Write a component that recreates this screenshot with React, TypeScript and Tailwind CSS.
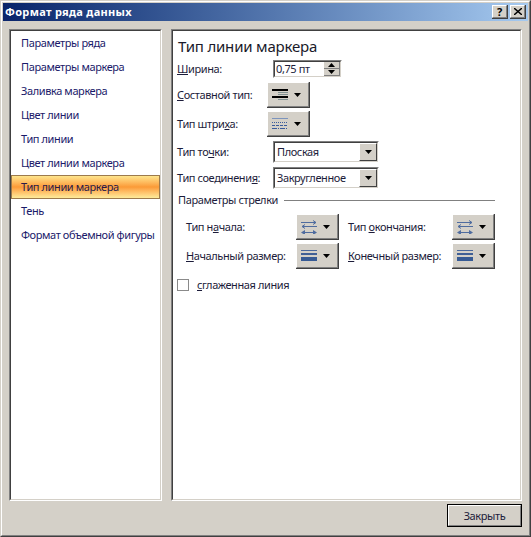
const font = "font-['Noto_Sans',sans-serif]";

const items = [
  "Параметры ряда",
  "Параметры маркера",
  "Заливка маркера",
  "Цвет линии",
  "Тип линии",
  "Цвет линии маркера",
  "Тип линии маркера",
  "Тень",
  "Формат объемной фигуры",
];

function Caret() {
  return (
    <svg width="7" height="4" viewBox="0 0 7 4" className="shrink-0">
      <path d="M0 0h7L3.5 4z" fill="#000" />
    </svg>
  );
}

function CompoundIcon() {
  return (
    <svg width="16" height="11" viewBox="0 0 16 11">
      <rect x="0" y="0" width="16" height="2" fill="#000" />
      <rect x="6" y="3" width="10" height="1" fill="#7f8f8f" />
      <rect x="6" y="5" width="10" height="1" fill="#7f8f8f" />
      <rect x="0" y="7" width="16" height="2" fill="#000" />
      <rect x="6" y="10" width="10" height="1" fill="#7f8f8f" />
    </svg>
  );
}

function DashIcon() {
  return (
    <svg width="16" height="11" viewBox="0 0 16 11">
      <path d="M0 .5h16" stroke="#7c94bd" />
      <path d="M0 4.5h16" stroke="#3a5c9c" strokeDasharray="1 1" />
      <path d="M0 7.5h16" stroke="#3a5c9c" strokeDasharray="3 1" />
      <path d="M0 10.5h16" stroke="#3a5c9c" strokeDasharray="5 1 1 1" />
    </svg>
  );
}

function ArrowIcon() {
  return (
    <svg width="16" height="14" viewBox="0 0 16 14" fill="none" stroke="#4f6c9f">
      <path d="M0 2.5h15M12 .5l3 2-3 2" />
      <path d="M1 6.5h15M4 4.5l-3 2 3 2" />
      <path d="M1 12.5h14" />
      <path d="M0 12.5l4-2.5v5zM16 12.5l-4-2.5v5z" fill="#4f6c9f" stroke="none" />
    </svg>
  );
}

function SizeIcon() {
  return (
    <svg width="16" height="11" viewBox="0 0 16 11">
      <rect x="0" y="0" width="16" height="1" fill="#4a689c" />
      <rect x="0" y="3" width="16" height="2" fill="#3f5f96" />
      <rect x="0" y="7" width="16" height="4" fill="#365a94" />
    </svg>
  );
}

function ToolButton({ children }: { children: React.ReactNode }) {
  return (
    <div className="h-[26px] w-[43px] shrink-0 border-r border-b border-[#404040] bg-[#d4d0c8]">
      <div className="flex h-full items-center border-t border-l border-r border-b border-t-white border-l-white border-r-[#808080] border-b-[#808080] pl-[4px]">
        <div className="flex w-[22px] justify-start">{children}</div>
        <Caret />
      </div>
    </div>
  );
}

function Sunken({ className, children }: { className: string; children: React.ReactNode }) {
  return (
    <div className={`${className} border-t border-l border-r border-b border-t-[#808080] border-l-[#808080] border-r-white border-b-white`}>
      <div className="flex h-full items-stretch border-t border-l border-r border-b border-t-[#404040] border-l-[#404040] border-r-[#d4d0c8] border-b-[#d4d0c8] bg-white">
        {children}
      </div>
    </div>
  );
}

function Combo({ value }: { value: string }) {
  return (
    <Sunken className="h-[22px] w-[106px] shrink-0">
      <div className="flex flex-1 items-center pl-[2px] whitespace-nowrap text-[#1c1c3a]">{value}</div>
      <div className="flex w-[18px] items-center justify-center border-t border-l border-r border-b border-t-white border-l-white border-r-[#404040] border-b-[#404040] bg-[#d4d0c8]">
        <Caret />
      </div>
    </Sunken>
  );
}

function Spin() {
  return (
    <Sunken className="h-[18px] w-[69px] shrink-0">
      <div className="flex flex-1 items-center pl-[1px] text-[#1c1c3a]">0,75 пт</div>
      <div className="flex w-[16px] flex-col">
        <div className="flex flex-1 items-center justify-center border-r border-b border-[#808080] bg-[#d4d0c8]">
          <svg width="7" height="4" viewBox="0 0 7 4">
            <path d="M0 4h7L3.5 0z" fill="#000" />
          </svg>
        </div>
        <div className="flex flex-1 items-center justify-center border-r border-b border-[#808080] bg-[#d4d0c8]">
          <Caret />
        </div>
      </div>
    </Sunken>
  );
}

function TitleButton({ children }: { children: React.ReactNode }) {
  return (
    <div className="h-[14px] w-[16px] border-r border-b border-[#404040] bg-[#d4d0c8]">
      <div className="flex h-full items-center justify-center border-t border-l border-r border-b border-t-white border-l-white border-r-[#808080] border-b-[#808080]">
        {children}
      </div>
    </div>
  );
}

function PanelFrame({ className, children }: { className: string; children: React.ReactNode }) {
  return (
    <div className={`${className} border-t border-l border-r border-b border-t-[#808080] border-l-[#808080] border-r-white border-b-white`}>
      <div className="h-full border-t border-l border-r border-b border-t-[#404040] border-l-[#404040] border-r-[#d4d0c8] border-b-[#d4d0c8] bg-white">
        {children}
      </div>
    </div>
  );
}

export default function App() {
  return (
    <div className={`${font} h-[537px] w-[531px] overflow-hidden border-t border-l border-r border-b border-t-[#d4d0c8] border-l-[#d4d0c8] border-r-[#404040] border-b-[#404040] bg-[#d4d0c8] text-[11px] leading-[14px] tracking-[-0.4px] text-[#1c1c3a]`}>
      <div className="flex h-full flex-col border-t border-l border-r border-b border-t-white border-l-white border-r-[#808080] border-b-[#808080] p-px">
        <div className="flex h-[18px] shrink-0 items-center justify-between bg-gradient-to-r from-[#0a246a] to-[#a6caf0] pr-[2px] pl-[2px]">
          <span className="text-[11px] font-bold tracking-[0.3px] text-white">Формат ряда данных</span>
          <div className="flex gap-[2px]">
            <TitleButton>
              <span className="text-[11px] leading-none font-bold text-black">?</span>
            </TitleButton>
            <TitleButton>
              <svg width="8" height="7" viewBox="0 0 8 7">
                <path d="M0 0l8 7M8 0L0 7" stroke="#000" strokeWidth="1.4" fill="none" />
              </svg>
            </TitleButton>
          </div>
        </div>

        <div className="flex flex-1 flex-col pt-[8px] pr-[6px] pl-[6px]">
          <div className="flex gap-[9px]">
            <PanelFrame className="h-[472px] w-[153px]">
              <ul>
                {items.map((item) => (
                  <li
                    key={item}
                    className={
                      item === "Тип линии маркера"
                        ? "flex h-[24px] items-center border border-[#9c7a4c] bg-gradient-to-b from-[#fde58c] via-[#fb9a36] to-[#fdeb9a] pl-[9px] whitespace-nowrap text-[#2a1a4a]"
                        : "flex h-[24px] items-center pl-[10px] whitespace-nowrap text-[#1a1a6a]"
                    }
                  >
                    {item}
                  </li>
                ))}
              </ul>
            </PanelFrame>

            <PanelFrame className="h-[472px] w-[351px]">
              <div className="pl-[4px] whitespace-nowrap">
                <h1 className="flex h-[29px] items-center pl-[1px] text-[15px] tracking-[-0.2px] text-[#1a1a2a]">Тип линии маркера</h1>

                <div className="flex h-[18px] items-center">
                  <span className="w-[96px]"><u>Ш</u>ирина:</span>
                  <Spin />
                </div>
                <div className="mt-[4px] flex items-center">
                  <span className="w-[90px]"><u>С</u>оставной тип:</span>
                  <ToolButton><CompoundIcon /></ToolButton>
                </div>
                <div className="mt-[3px] flex items-center">
                  <span className="w-[90px]">Тип штри<u>х</u>а:</span>
                  <ToolButton><DashIcon /></ToolButton>
                </div>
                <div className="mt-[4px] flex items-center">
                  <span className="w-[96px]">Тип то<u>ч</u>ки:</span>
                  <Combo value="Плоская" />
                </div>
                <div className="mt-[4px] flex items-center">
                  <span className="w-[96px]">Тип соединени<u>я</u>:</span>
                  <Combo value="Закругленное" />
                </div>

                <div className="mt-[4px] flex h-[14px] items-center gap-[5px] pl-px">
                  <span className="w-[101px]">Параметры стрелки</span>
                  <div className="h-px w-[211px] bg-[#808080]" />
                </div>

                <div className="mt-[7px] flex items-center pl-[9px]">
                  <span className="w-[110px]">Тип н<u>а</u>чала:</span>
                  <ToolButton><ArrowIcon /></ToolButton>
                  <span className="ml-[9px] w-[104px]">Тип <u>о</u>кончания:</span>
                  <ToolButton><ArrowIcon /></ToolButton>
                </div>
                <div className="mt-[3px] flex items-center pl-[9px]">
                  <span className="w-[110px]"><u>Н</u>ачальный размер:</span>
                  <ToolButton><SizeIcon /></ToolButton>
                  <span className="ml-[9px] w-[104px]"><u>К</u>онечный размер:</span>
                  <ToolButton><SizeIcon /></ToolButton>
                </div>

                <label className="mt-[10px] flex h-[12px] items-center">
                  <span className="h-[12px] w-[12px] border border-[#8a8a8a] bg-white" />
                  <span className="ml-[8px]"><u>с</u>глаженная линия</span>
                </label>
              </div>
            </PanelFrame>
          </div>

          <div className="mt-[3px] flex justify-end">
            <div className="h-[23px] w-[75px] border border-black bg-[#d4d0c8]">
              <div className="flex h-full items-center justify-center border-t border-l border-r border-b border-t-white border-l-white border-r-[#808080] border-b-[#808080]">
                Закрыть
              </div>
            </div>
          </div>
        </div>
      </div>
    </div>
  );
}
